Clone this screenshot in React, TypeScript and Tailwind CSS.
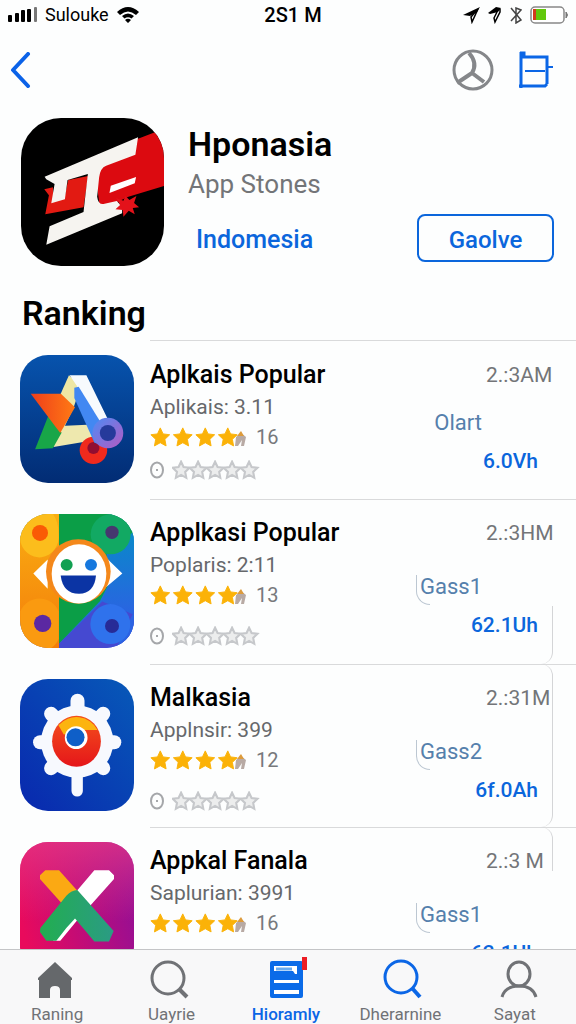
import type { ReactNode } from "react";
import clsx from "clsx";

type Iapp = {
  name: string;
  detail: string;
  rating: string;
  time: string;
  tag: string;
  size: string;
  iconHeight: string;
  icon: ReactNode;
  edge?: string;
  arc?: boolean;
};

const STAR =
  "M12 2l3 6.400 7 .9-5.100 4.900 1.300 7L12 17.800l-6.200 3.400 1.300-7L2 9.300l7-.9z";

function HeroIcon() {
  return (
    <svg viewBox="62 54 430 444" preserveAspectRatio="none" className="h-[148px] w-[143px] shrink-0 rounded-[40px] bg-black">
      <path d="M410 118L492 86V258L385 290L300 330L285 215L320 175L405 160z" fill="#dc0a10" />
      <path d="M132 268L158 262L160 300L192 296L204 240L264 228L250 322L135 343L146 286z" fill="#e21a12" />
      <path
        d="M133 230L414 112L406 164L318 197Q300 204 297 232L291 290Q294 314 310 312L350 303L366 320L366 340L138 434L148 379L250 336L263 222L202 240L194 298L153 310L163 252L138 238z"
        fill="#f6f4f0"
      />
      <path d="M332 257L408 231L404 250L328 279z" fill="#fff" />
      <path d="M348 294L370 302L376 288L388 300L409 288L402 309L417 322L398 324L404 343L386 332L370 350L368 330L346 328L360 315z" fill="#e3121a" />
    </svg>
  );
}

function TriangleIcon() {
  return (
    <>
      <defs>
        <linearGradient id="navy" x1="0" y1="0" x2="0" y2="1">
          <stop offset="0" stopColor="#0753ad" />
          <stop offset="1" stopColor="#022c74" />
        </linearGradient>
        <linearGradient id="ring" x1="0" y1="0" x2="1" y2="1">
          <stop offset="0" stopColor="#4d8bf5" />
          <stop offset="1" stopColor="#b35ac2" />
        </linearGradient>
        <linearGradient id="flame" x1="0" y1="0" x2="1" y2="0">
          <stop offset="0" stopColor="#ee3e1a" />
          <stop offset="1" stopColor="#ff7a14" />
        </linearGradient>
      </defs>
      <rect x="62" y="43" width="340" height="384" fill="url(#navy)" />
      <path d="M208 104L244 135L222 200L180 290L162 318L130 280z" fill="#efe7a4" />
      <path d="M182 256L262 252L300 296L162 319z" fill="#eee8ae" />
      <path d="M150 216L186 276L160 323L107 326z" fill="#18a648" />
      <path d="M94 159L184 159L226 200L182 277z" fill="url(#flame)" />
      <path d="M210 104H260L324 236L290 248L232 136z" fill="#f7fafd" />
      <circle cx="281" cy="329" r="41" fill="#f02a1d" />
      <circle cx="281" cy="322" r="18" fill="#920d31" />
      <path d="M224 141L237 138L302 244L316 316L284 306L224 172z" fill="#4288f2" />
      <circle cx="324" cy="277" r="46" fill="url(#ring)" />
      <circle cx="324" cy="277" r="24" fill="#263a9b" />
    </>
  );
}

function SmileIcon() {
  return (
    <>
      <defs>
        <linearGradient id="amber" x1="0" y1="0" x2="0" y2="1">
          <stop offset="0" stopColor="#f9ae12" />
          <stop offset="1" stopColor="#f47d0a" />
        </linearGradient>
        <linearGradient id="sea" x1="0" y1="0" x2="0" y2="1">
          <stop offset="0" stopColor="#0989c9" />
          <stop offset="1" stopColor="#2b63e2" />
        </linearGradient>
      </defs>
      <rect x="61" y="37" width="342" height="403" fill="url(#sea)" />
      <path d="M177 37H403V100L300 300L177 428z" fill="#0b9e47" />
      <path d="M403 90V345L300 310L330 250L320 150z" fill="url(#sea)" />
      <path d="M177 428L308 300L403 340V440H177z" fill="#4549d1" />
      <path d="M403 330V440H350z" fill="#2b63e2" />
      <rect x="61" y="37" width="117" height="403" fill="url(#amber)" />
      <path d="M61 37H160Q177 60 177 98A56 60 0 0 1 61 112z" fill="#fcbd1c" />
      <circle cx="333" cy="98" r="60" fill="#12a963" />
      <path d="M62 330A62 62 0 0 1 177 330V412A60 60 0 0 1 62 400z" fill="#fa9a10" />
      <circle cx="332" cy="368" r="60" fill="#2f72ec" />
      <circle cx="121" cy="94" r="24" fill="#fa5a05" />
      <circle cx="337" cy="92" r="20" fill="#46376f" />
      <circle cx="129" cy="366" r="26" fill="#5b28a2" />
      <circle cx="337" cy="374" r="21" fill="#272b97" />
      <path d="M101 216L144 174V262zM368 216L325 174L318 258z" fill="#fff" />
      <ellipse cx="236" cy="210" rx="97" ry="97" fill="#f4881b" />
      <ellipse cx="238" cy="217" rx="82" ry="89" fill="#fff" />
      <circle cx="201" cy="190" r="18" fill="#12a052" />
      <circle cx="274" cy="190" r="18" fill="#1678de" />
      <path d="M183 222H289Q284 276 238 277Q190 277 183 222z" fill="#0b34a4" />
    </>
  );
}

function GearIcon() {
  return (
    <>
      <defs>
        <linearGradient id="royal" x1="1" y1="0" x2="0" y2="1">
          <stop offset="0" stopColor="#0759b8" />
          <stop offset="1" stopColor="#0928ae" />
        </linearGradient>
        <linearGradient id="cherry" x1="0" y1="0" x2="0" y2="1">
          <stop offset="0" stopColor="#f4501c" />
          <stop offset="1" stopColor="#e5161a" />
        </linearGradient>
      </defs>
      <rect x="61" y="40" width="341" height="394" fill="url(#royal)" />
      <g stroke="#f7f9fe" strokeWidth="42" strokeLinecap="round">
        <path d="M233 225V105" />
        <path d="M232 225V374" strokeWidth="34" />
        <path d="M121 229H343" />
        <path d="M154 144L310 306M310 144L154 306" />
      </g>
      <circle cx="232" cy="227" r="108" fill="#f7f9fe" />
      <ellipse cx="230" cy="226" rx="73" ry="76" fill="url(#cherry)" />
      <path d="M176 178A73 76 0 0 1 293 192L255 192L192 206z" fill="#fcb40f" />
      <circle cx="229" cy="215" r="34" fill="#fff" />
      <circle cx="227" cy="214" r="27" fill="#0f5fc8" />
    </>
  );
}

function CrossIcon() {
  return (
    <>
      <defs>
        <linearGradient id="magenta" x1="0" y1="0.6" x2="1" y2="0.3">
          <stop offset="0" stopColor="#e90a5c" />
          <stop offset="1" stopColor="#930f96" />
        </linearGradient>
        <linearGradient id="glow" x1="0" y1="0" x2="0" y2="1">
          <stop offset="0" stopColor="#ec3a84" stopOpacity="0.7" />
          <stop offset="0.6" stopColor="#ec3a84" stopOpacity="0" />
        </linearGradient>
        <linearGradient id="leaf" x1="0" y1="0" x2="1" y2="0">
          <stop offset="0" stopColor="#22ae50" />
          <stop offset="1" stopColor="#2b9b84" />
        </linearGradient>
      </defs>
      <rect x="61" y="48" width="342" height="393" fill="url(#magenta)" />
      <rect x="61" y="48" width="342" height="393" fill="url(#glow)" />
      <path d="M284 132H328L343 147V158L232 282L182 342H160L200 230z" fill="#fff" />
      <path d="M137 132H178L233 193L186 230L121 158V147z" fill="#fba913" />
      <path d="M233 191L342 313L328 344H284L226 276L200 304L170 342H140L121 316L122 304L200 208Q216 192 233 191z" fill="url(#leaf)" />
    </>
  );
}

const apps: Iapp[] = [
  {
    name: "Aplkais Popular",
    detail: "Aplikais: 3.11",
    rating: "16",
    time: "2.:3AM",
    tag: "Olart",
    size: "6.0Vh",
    iconHeight: "h-[128px]",
    icon: <svg viewBox="62 43 340 384" preserveAspectRatio="none" className="size-full"><TriangleIcon /></svg>,
  },
  {
    name: "Applkasi Popular",
    detail: "Poplaris: 2:11",
    rating: "13",
    time: "2.:3HM",
    tag: "Gass1",
    size: "62.1Uh",
    iconHeight: "h-[134px]",
    icon: <svg viewBox="61 37 342 403" preserveAspectRatio="none" className="size-full"><SmileIcon /></svg>,
    edge: "bottom-0 h-[58px] rounded-br-xl",
    arc: true,
  },
  {
    name: "Malkasia",
    detail: "Applnsir: 399",
    rating: "12",
    time: "2.:31M",
    tag: "Gass2",
    size: "6f.0Ah",
    iconHeight: "h-[132px]",
    icon: <svg viewBox="61 40 341 394" preserveAspectRatio="none" className="size-full"><GearIcon /></svg>,
    edge: "inset-y-0 rounded-r-xl",
    arc: true,
  },
  {
    name: "Appkal Fanala",
    detail: "Saplurian: 3991",
    rating: "16",
    time: "2.:3 M",
    tag: "Gass1",
    size: "62.1Uh",
    iconHeight: "h-[132px]",
    icon: <svg viewBox="61 48 342 393" preserveAspectRatio="none" className="size-full"><CrossIcon /></svg>,
    edge: "top-0 h-[44px] rounded-tr-xl",
    arc: true,
  },
];

function StatusBar() {
  return (
    <div className="flex h-[30px] items-center justify-between px-2 text-black">
      <div className="flex flex-1 items-center gap-2">
        <svg viewBox="0 0 29 16" className="h-4 w-[29px]">
          <rect x="0" y="8" width="4" height="7" rx="1" />
          <rect x="7" y="6" width="4" height="9" rx="1" />
          <rect x="13" y="3" width="4" height="12" rx="1" />
          <rect x="19" y="2" width="4" height="13" rx="1" />
          <rect x="26" y="0" width="3" height="15" rx="1" fill="#777" />
        </svg>
        <span className="text-lg">Sulouke</span>
        <svg viewBox="0 0 22 16" className="h-4 w-[22px]">
          <path d="M0 5Q11-5 22 5L19 8Q11 1 3 8zM5 9Q11 4 17 9L14.500 11.500Q11 9 7.500 11.500zM8 13Q11 10.500 14 13L11 16z" />
        </svg>
      </div>
      <span className="pl-2.5 text-xl font-medium">2S1 M</span>
      <div className="flex flex-1 items-center justify-end gap-2">
        <svg viewBox="0 0 17 17" className="size-[17px]">
          <path d="M0 8L17 0L14 5L7 9z" />
          <path d="M15 2L9 15L8 10L13 4" fill="none" stroke="#000" strokeWidth="1.500" />
        </svg>
        <svg viewBox="0 0 14 17" className="h-[17px] w-3.5">
          <path d="M0 6L8 0L13 1L10 5L2 7z" />
          <path d="M12 2V5L7 15L6 11L9 5" fill="none" stroke="#000" strokeWidth="1.500" />
        </svg>
        <svg viewBox="0 0 12 17" className="h-[17px] w-3" fill="none" stroke="#444" strokeWidth="1.500">
          <path d="M1 1L11 13L6 16V1L11 3L1 14" />
        </svg>
        <svg viewBox="0 0 38 18" className="h-[18px] w-[38px]">
          <rect x="1" y="1" width="33" height="16" rx="4" fill="#fff" stroke="#888" strokeWidth="1.500" />
          <rect x="3" y="3" width="4" height="11" fill="#d33a1d" />
          <rect x="6" y="3" width="10" height="11" fill="#62c80c" />
          <path d="M36 6Q39 9 36 12z" fill="#777" stroke="#777" />
        </svg>
      </div>
    </div>
  );
}

function Toolbar() {
  return (
    <div className="flex h-20 items-center justify-between pr-[22px] pl-2.5">
      <button aria-label="Back">
        <svg viewBox="0 0 22 36" className="h-9 w-[22px]" fill="none" stroke="#0b62e8" strokeWidth="4">
          <path d="M18 2L3 18L18 34" strokeLinecap="round" strokeLinejoin="round" />
        </svg>
      </button>
      <div className="flex items-center gap-6">
        <button aria-label="Explore">
          <svg viewBox="0 0 42 42" className="size-[42px]" fill="none" stroke="#85878a" strokeWidth="3">
            <circle cx="21" cy="21" r="19" />
            <path d="M17 4Q26 14 20 24L5 34M20 24L32 33" strokeWidth="4" />
          </svg>
        </button>
        <button aria-label="Share">
          <svg viewBox="0 0 36 38" className="h-[38px] w-9" fill="none" stroke="#0b66e6" strokeWidth="3">
            <path d="M3 1V37M3 6H29V33M1 35H27L29 33M2 2H6V6" />
            <path d="M7 20H27M29 16H35" strokeWidth="2" />
          </svg>
        </button>
      </div>
    </div>
  );
}

function Stars() {
  return (
    <svg viewBox="0 0 98 22" className="h-[22px] w-[98px]" fill="#fbb208" stroke="#fbb208" strokeLinejoin="round" role="img" aria-label="4.5 stars">
      {[0, 1, 2, 3].map((i) => (
        <path key={i} d={STAR} transform={`translate(${i * 22.500 - 1} 0) scale(.94)`} />
      ))}
      <g stroke="none">
        <path d="M86 11L91 7L96 11L94 20H91L92 14L88 20H85z" fill="#b8aaa4" />
        <path d="M87 10L91 5L94 10z" fill="#dd9b3c" />
      </g>
    </svg>
  );
}

function EmptyStars() {
  return (
    <svg viewBox="0 0 88 20" className="h-5 w-[88px]" fill="#eceded" stroke="#c6c8cb" strokeWidth="2.500">
      {[0, 1, 2, 3, 4].map((i) => (
        <path key={i} d={STAR} transform={`translate(${i * 17 - 1} 0) scale(.84)`} />
      ))}
    </svg>
  );
}

function AppRow({ data }: { data: Iapp }) {
  const { name, detail, rating, time, tag, size, iconHeight, icon, edge, arc } = data;

  return (
    <li className="relative flex gap-4 pl-5">
      <div className="pt-[15px] pb-4">
        <div className={clsx("w-[114px] overflow-hidden rounded-[28px]", iconHeight)}>{icon}</div>
      </div>
      <div className={clsx("flex min-w-0 flex-1 justify-between border-t border-[#d9dadb] pr-6", arc ? "pt-[17px]" : "pt-[18px]")}>
        <div className="whitespace-nowrap">
          <h3 className="text-[25px] leading-8 font-medium text-black">{name}</h3>
          <p className="text-[21px] leading-8 text-[#66686b]">{detail}</p>
          <div className="flex h-7 items-center gap-2 text-xl text-[#77797c]">
            <Stars />
            {rating}
          </div>
          <div className={clsx("flex items-center gap-2 text-xl text-[#a5a7aa]", arc ? "h-[50px] pt-1" : "h-[38px]")}>
            <svg viewBox="0 0 14 18" className="h-[18px] w-3.5" fill="none" stroke="#a5a7aa" strokeWidth="2">
              <ellipse cx="7" cy="9" rx="6" ry="7.500" />
              <path d="M7 8V10" />
            </svg>
            <EmptyStars />
          </div>
        </div>
        <div className="flex w-[132px] flex-col whitespace-nowrap">
          <span className="ml-[66px] text-[21px] leading-8 text-[#737578]">{time}</span>
          <span className={clsx("relative w-[62px] text-right text-[22px] leading-8 text-[#5580ac]", arc ? "mt-[22px]" : "mt-4")}>
            {arc && <i className="absolute top-1 -left-1 h-[30px] w-3.5 rounded-bl-[14px] border-b border-l border-[#bcc7d2]" />}
            {tag}
          </span>
          <button className="mt-1.5 mr-3.5 self-end text-[21px] leading-8 font-medium text-[#0b66dc]">{size}</button>
        </div>
      </div>
      {edge && <i className={clsx("pointer-events-none absolute right-[23px] w-4 border-r border-[#d4d5d7]", edge)} />}
    </li>
  );
}

function Tab({ label, active, children }: { label: string; active?: boolean; children: ReactNode }) {
  return (
    <a
      href="#"
      className={clsx(
        "flex flex-col items-center gap-1 pt-2.5 text-[17px] leading-5",
        active ? "font-medium text-[#0b66e6]" : "text-[#707276]",
      )}
    >
      <svg viewBox="0 0 40 40" className="size-10 overflow-visible" fill="none" stroke="#707276" strokeWidth="3">
        {children}
      </svg>
      {label}
    </a>
  );
}

function TabBar() {
  return (
    <nav className="grid shrink-0 grid-cols-5 border-t border-[#c4c5c7] bg-[#f8f8f9] pr-1">
      <Tab label="Raning">
        <path d="M18 2L35 18V20H34V38H23V30Q23 26 18 26Q13 26 13 30V38H2V20H1V18z" fill="#65686b" stroke="none" />
      </Tab>
      <Tab label="Uayrie">
        <circle cx="16" cy="18" r="16" />
        <path d="M27 29L35 37" strokeWidth="4" />
      </Tab>
      <Tab label="Hioramly" active>
        <rect x="4" y="1" width="33" height="37" rx="2" fill="#0b6be8" stroke="none" />
        <path d="M8 6H31V14H29L27 11H8zM8 20H33V23H8zM8 30H33V34H8z" fill="#fff" stroke="none" />
        <path d="M10 9H26" stroke="#6aabee" />
        <rect x="36" y="-3" width="5" height="13" fill="#ec1c24" stroke="none" />
      </Tab>
      <Tab label="Dherarnine">
        <g stroke="#0b66e6">
          <circle cx="21" cy="17" r="16" />
          <path d="M32 28L40 37" strokeWidth="4" />
        </g>
      </Tab>
      <Tab label="Sayat">
        <ellipse cx="24" cy="14" rx="11" ry="12" />
        <path d="M7 37Q10 26 24 26Q38 26 41 37" />
      </Tab>
    </nav>
  );
}

export default function App() {
  return (
    <div className="flex h-screen flex-col bg-[#fdfefe] font-['Roboto','Liberation_Sans',sans-serif]">
      <StatusBar />
      <Toolbar />
      <main className="min-h-0 flex-1 overflow-hidden">
        <section className="flex gap-6 pt-2 pr-[22px] pl-[21px]">
          <HeroIcon />
          <div className="flex-1 pt-2">
            <h1 className="text-[34px] leading-9 font-semibold text-black">Hponasia</h1>
            <p className="pt-1.5 text-[26px] leading-8 text-[#737578]">App Stones</p>
            <div className="flex items-center justify-between pt-3.5 pl-2">
              <a href="#" className="pt-1 text-[25px] font-medium text-[#0b66dc]">Indomesia</a>
              <button className="h-12 w-[137px] rounded-lg border-2 border-[#0b66dc] pt-1 text-2xl font-medium text-[#0b66dc]">
                Gaolve
              </button>
            </div>
          </div>
        </section>
        <h2 className="pt-[27px] pb-[7px] pl-[22px] text-[34px] leading-10 font-semibold text-black">Ranking</h2>
        <ul>
          {apps.map((v, i) => <AppRow data={v} key={i} />)}
        </ul>
      </main>
      <TabBar />
    </div>
  );
}
